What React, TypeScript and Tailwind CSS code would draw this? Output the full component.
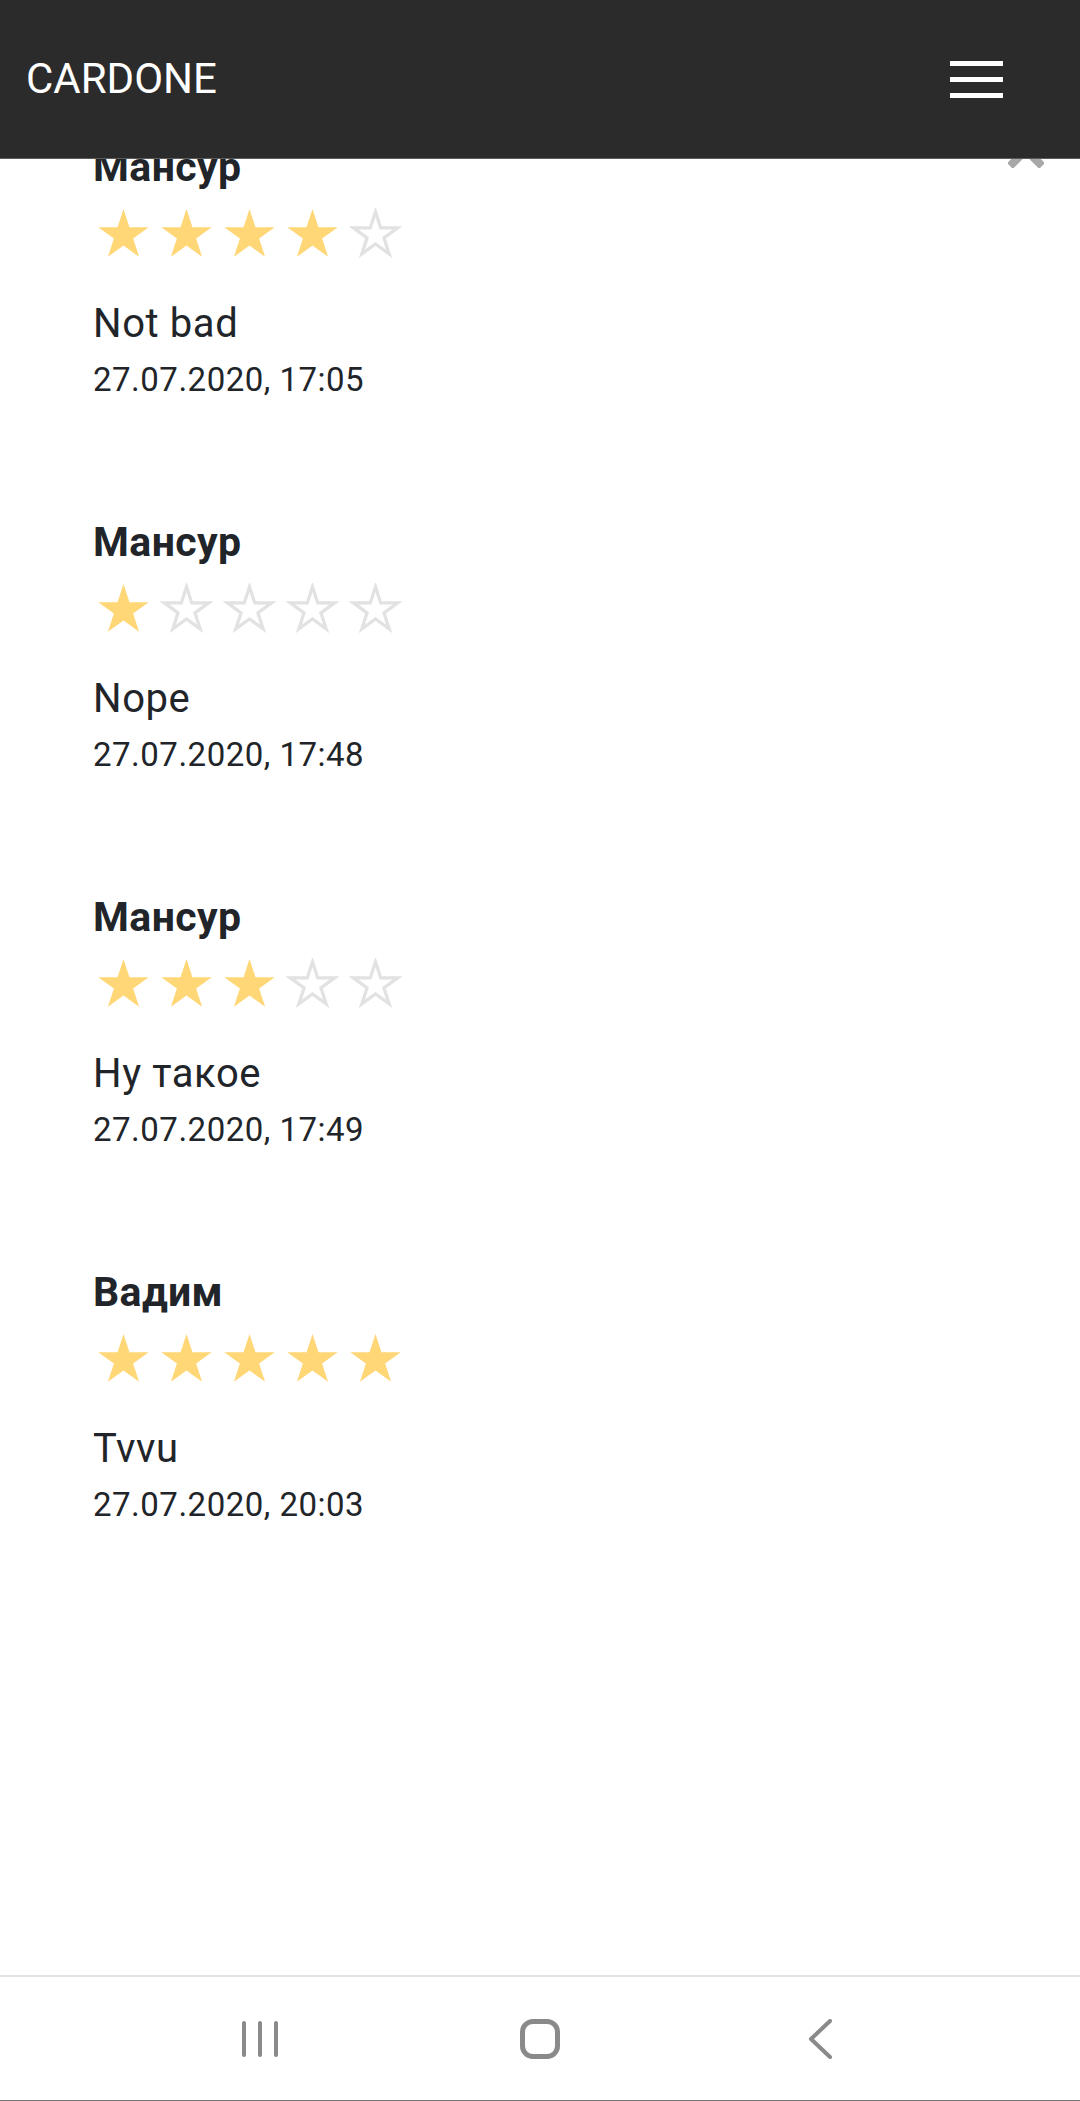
import React from "react";

type Review = { name: string; rating: number; text: string; date: string };

const reviews: Review[] = [
  { name: "Мансур", rating: 4, text: "Not bad", date: "27.07.2020, 17:05" },
  { name: "Мансур", rating: 1, text: "Nope", date: "27.07.2020, 17:48" },
  { name: "Мансур", rating: 3, text: "Ну такое", date: "27.07.2020, 17:49" },
  { name: "Вадим", rating: 5, text: "Tvvu", date: "27.07.2020, 20:03" },
];

const STAR =
  "50,0 61.23,34.55 97.55,34.55 68.16,55.9 79.39,90.45 50,69.1 20.61,90.45 31.84,55.9 2.45,34.55 38.77,34.55";

function Star({ filled }: { filled: boolean }) {
  if (filled) {
    return (
      <svg viewBox="0 0 100 91" className="h-[50px] w-[53px]">
        <polygon points={STAR} fill="#ffd777" />
      </svg>
    );
  }
  return (
    <svg viewBox="-7 -7 114 105" className="h-[50px] w-[53px]">
      <polygon points={STAR} fill="none" stroke="#e2e2e2" strokeWidth={7} />
    </svg>
  );
}

function ReviewItem({ review }: { review: Review }) {
  return (
    <div className="mb-[118px]">
      <div className="text-[41px] font-bold leading-[48px] tracking-[0.4px] text-[#212529]">
        {review.name}
      </div>
      <div className="ml-[4px] mt-[17px] flex gap-[10px]">
        {[1, 2, 3, 4, 5].map((i) => (
          <Star key={i} filled={i <= review.rating} />
        ))}
      </div>
      <div className="mt-[43px] text-[40px] leading-[46px] tracking-[0.6px] text-[#212529]">
        {review.text}
      </div>
      <div className="mt-[13px] text-[33px] leading-[40px] tracking-[0.5px] text-[#212529]">
        {review.date}
      </div>
    </div>
  );
}

export default function App() {
  return (
    <div className="relative flex h-[2101px] w-full flex-col overflow-hidden bg-white font-['Roboto','Liberation_Sans',sans-serif]">
      {/* fixed top bar over the scrolled list */}
      <header className="absolute left-0 right-0 top-0 z-10 flex h-[159px] items-center justify-between border-b border-[#5c5c5c] bg-[#2b2b2b] pl-[26px] pr-[77px]">
        <span className="text-[42px] leading-none text-white">CARDONE</span>
        <div className="flex flex-col gap-[11px]">
          <div className="h-[5px] w-[53px] bg-white" />
          <div className="h-[5px] w-[53px] bg-white" />
          <div className="h-[5px] w-[53px] bg-white" />
        </div>
      </header>

      {/* close button of the reviews panel, half hidden by the bar */}
      <svg
        viewBox="0 0 36 36"
        className="absolute left-[1008px] top-[132px] h-[36px] w-[36px]"
      >
        <path d="M2 2L34 34M34 2L2 34" stroke="#a8a8a8" strokeWidth={8} />
      </svg>

      <main className="flex-1 pl-[93px] pt-[143px]">
        {reviews.map((r, i) => (
          <ReviewItem key={i} review={r} />
        ))}
      </main>

      {/* system navigation bar */}
      <nav className="flex h-[126px] items-center justify-center border-t-2 border-b border-t-[#e4e4e4] border-b-[#777] bg-white">
        <div className="flex w-[280px] justify-center">
          <div className="flex gap-[12px]">
            <div className="h-[36px] w-[4px] rounded-full bg-[#8a8a8a]" />
            <div className="h-[36px] w-[4px] rounded-full bg-[#8a8a8a]" />
            <div className="h-[36px] w-[4px] rounded-full bg-[#8a8a8a]" />
          </div>
        </div>
        <div className="flex w-[280px] justify-center">
          <div className="h-[40px] w-[40px] rounded-[13px] border-[5px] border-[#8a8a8a]" />
        </div>
        <div className="flex w-[280px] justify-center">
          <svg viewBox="0 0 26 40" className="h-[40px] w-[26px]">
            <path
              d="M23 2L4 20L23 38"
              fill="none"
              stroke="#8a8a8a"
              strokeWidth={4}
              strokeLinecap="round"
              strokeLinejoin="round"
            />
          </svg>
        </div>
      </nav>
    </div>
  );
}
